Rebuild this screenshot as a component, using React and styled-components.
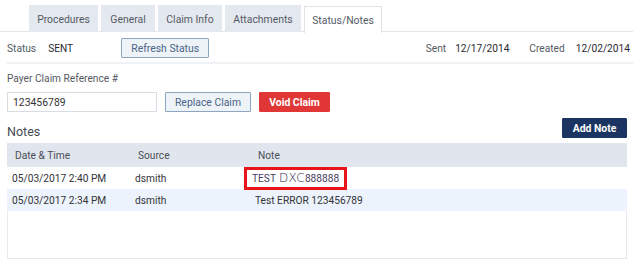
import styled, { createGlobalStyle } from "styled-components";

const GlobalStyle = createGlobalStyle`
    * { box-sizing: border-box; }
    body {
        margin: 0;
        background: #ffffff;
        font-family: Roboto, "Liberation Sans", sans-serif;
        font-size: 10.2px;
        color: #333333;
    }
`

const Page = styled.div`
    width: 633px;
    height: 264px;
    overflow: hidden;
    padding-top: 5px;
`

const TabBar = styled.div`
    display: flex;
    gap: 3px;
    padding-left: 29px;
    border-bottom: 1px solid #e2e6ec;
    height: 27px;
`

const Tab = styled.div`
    height: 27px;
    display: flex;
    align-items: center;
    justify-content: center;
    width: ${(p) => p.$w}px;
    background: ${(p) => (p.$active ? "#ffffff" : "#e4e8ef")};
    border: 1px solid ${(p) => (p.$active ? "#dfe3ea" : "#e4e8ef")};
    border-bottom: none;
    color: #555b66;
    font-size: 10.4px;
    position: relative;
    top: ${(p) => (p.$active ? "1px" : "0")};
`

const Content = styled.div`
    padding: 0 6px 0 7px;
`

const StatusRow = styled.div`
    display: flex;
    align-items: center;
    height: 20px;
    margin-top: 6px;
    padding-bottom: 4px;
    border-bottom: 2px solid #f0f1f4;
    box-sizing: content-box;
    margin-right: -6px;
`

const Label = styled.span`
    color: #555a62;
    margin-right: ${(p) => p.$gap || 0}px;
`

const Value = styled.span`
    color: #2a2a33;
    margin-right: ${(p) => p.$gap || 0}px;
`

const Spacer = styled.div`
    flex: 1;
`

const Button = styled.button`
    height: 20px;
    padding: 0;
    width: ${(p) => p.$w}px;
    font-family: Roboto, "Liberation Sans", sans-serif;
    font-size: 10.4px;
    border-radius: 1px;
    cursor: pointer;
    margin-left: ${(p) => p.$ml || 0}px;
    background: ${(p) =>
        p.$kind === "danger" ? "#e03636" : p.$kind === "primary" ? "#1c3462" : "#eef3f8"};
    color: ${(p) => (p.$kind ? "#ffffff" : "#4a6487")};
    border: 1px solid ${(p) =>
        p.$kind === "danger" ? "#e03636" : p.$kind === "primary" ? "#1c3462" : "#8ea5bf"};
    font-weight: ${(p) => (p.$kind ? 700 : 400)};
`

const FieldLabel = styled.div`
    color: #555a62;
    margin-top: 9px;
    height: 14px;
`

const FieldRow = styled.div`
    display: flex;
    align-items: center;
    margin-top: 5px;
`

const Input = styled.input`
    width: 150px;
    height: 20px;
    border: 1px solid #d9dde3;
    padding: 0 5px;
    font-family: Roboto, "Liberation Sans", sans-serif;
    font-size: 10.4px;
    color: #333;
    outline: none;
`

const NotesHead = styled.div`
    display: flex;
    align-items: flex-end;
    justify-content: space-between;
    margin-top: 6px;
    height: 20px;
`

const Title = styled.h2`
    margin: 0;
    font-size: 12.5px;
    font-weight: 400;
    color: #444a52;
    line-height: 16px;
    position: relative;
    top: 2px;
`

const Table = styled.div`
    margin-top: 5px;
    width: 620px;
    height: 116px;
    border: 1px solid #e6e9ee;
    border-top: none;
`

const Row = styled.div`
    display: grid;
    grid-template-columns: 123px 120px 1fr;
    align-items: center;
    height: ${(p) => (p.$head ? 24 : 22)}px;
    background: ${(p) => (p.$head ? "#e1e5ed" : p.$alt ? "#edf3fc" : "#ffffff")};
    color: ${(p) => (p.$head ? "#4a4f58" : "#333338")};
    padding-left: ${(p) => (p.$head ? 8 : 5)}px;
    margin: 0 -1px;
`

const Cell = styled.div`
    white-space: nowrap;
`

const Highlight = styled.span`
    display: inline-block;
    border: 3px solid #e8141a;
    margin-left: -11px;
    padding: 0 5px 0 5px;
    height: 23px;
    line-height: 17px;
    color: #4b3d60;
`

const Logo = styled.span`
    font-family: "DejaVu Sans", sans-serif;
    font-size: 12px;
    font-weight: 300;
    letter-spacing: 0.3px;
    margin-left: 3px;
    color: #2e2248;
`

const tabs = [
    { name: "Procedures", w: 69 },
    { name: "General", w: 54 },
    { name: "Claim Info", w: 64 },
    { name: "Attachments", w: 76 },
    { name: "Status/Notes", w: 78, active: true },
];

const notes = [
    { date: "05/03/2017 2:40 PM", source: "dsmith", note: null },
    { date: "05/03/2017 2:34 PM", source: "dsmith", note: "Test ERROR 123456789" },
];

export default function App() {
    return (
        <Page>
            <GlobalStyle />
            <TabBar>
                {tabs.map((t) => (
                    <Tab key={t.name} $w={t.w} $active={t.active}>{t.name}</Tab>
                ))}
            </TabBar>
            <Content>
                <StatusRow>
                    <Label $gap={12}>Status</Label>
                    <Value>SENT</Value>
                    <Button $w={88} $ml={48}>Refresh Status</Button>
                    <Spacer />
                    <Label $gap={9}>Sent</Label>
                    <Value $gap={20}>12/17/2014</Value>
                    <Label $gap={11}>Created</Label>
                    <Value $gap={3}>12/02/2014</Value>
                </StatusRow>
                <FieldLabel>Payer Claim Reference #</FieldLabel>
                <FieldRow>
                    <Input defaultValue="123456789" />
                    <Button $w={86} $ml={8}>Replace Claim</Button>
                    <Button $w={71} $ml={8} $kind="danger">Void Claim</Button>
                </FieldRow>
                <NotesHead>
                    <Title>Notes</Title>
                    <Button $w={65} $kind="primary">Add Note</Button>
                </NotesHead>
                <Table>
                    <Row $head>
                        <Cell>Date &amp; Time</Cell>
                        <Cell>Source</Cell>
                        <Cell>Note</Cell>
                    </Row>
                    {notes.map((n, i) => (
                        <Row key={n.date} $alt={i % 2 === 1}>
                            <Cell>{n.date}</Cell>
                            <Cell>{n.source}</Cell>
                            <Cell>
                                {n.note || (
                                    <Highlight>TEST<Logo>DXC</Logo>888888</Highlight>
                                )}
                            </Cell>
                        </Row>
                    ))}
                </Table>
            </Content>
        </Page>
    );
}
